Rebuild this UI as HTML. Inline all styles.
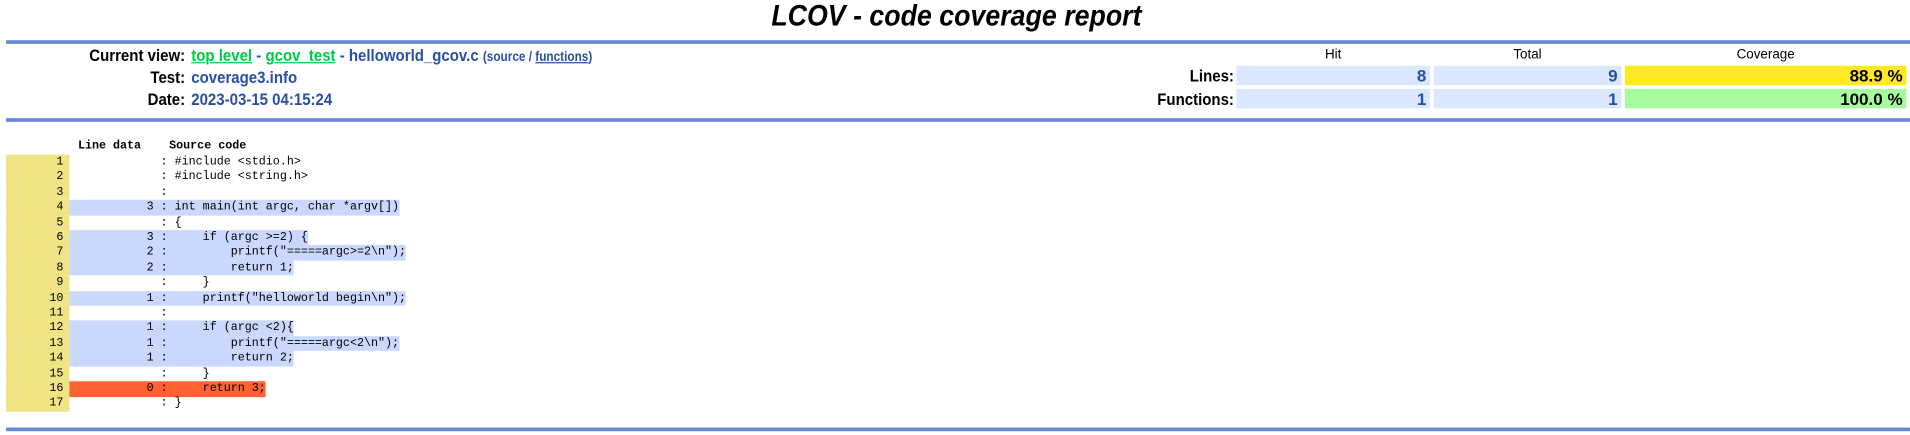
<!DOCTYPE html>
<html><head><meta charset="utf-8"><style>
body{margin:0;background:#fff;font-family:"Liberation Sans",Arial,sans-serif;width:1910px;height:434px;position:relative;overflow:hidden}
#w{position:absolute;left:0;top:0;width:1568px;height:357px;transform:scale(1.2181);transform-origin:0 0}
.a{position:absolute;white-space:pre}
.title{left:0;width:1570px;top:0;text-align:center;font-size:24px;font-weight:bold;font-style:italic;line-height:28px;transform:scaleX(0.915);transform-origin:787px 0}
.rule{position:absolute;left:5px;width:1563px;height:3px;background:#6688d4}
.lab{font-size:14px;font-weight:bold;text-align:right;line-height:18px;transform:scaleX(0.88);transform-origin:100% 0}
.val{font-size:14px;font-weight:bold;color:#284fa8;line-height:18px;transform:scaleX(0.88);transform-origin:0 0}
.g{color:#00cb40;text-decoration:underline}
.sm{font-size:11px}
.cell{position:absolute;height:16px;line-height:16px;font-size:14px;font-weight:bold;text-align:right;color:#284fa8;box-sizing:border-box;padding-right:3px}
.hd{font-size:11px;text-align:center;line-height:14px}
pre{margin:0;font-family:"Liberation Mono","DejaVu Sans Mono",monospace;font-size:9.6px;line-height:12.4px}
.ln{position:absolute;left:5px;width:52px;height:12.6px;background:#efe383;text-align:right;box-sizing:border-box;padding-right:5px}
.row{position:absolute;left:57px;height:12.6px}
.h{background:#cad7fe}
.z{background:#ff6230}
</style></head><body><div id="w">
<div class="a title">LCOV - code coverage report</div>
<div class="rule" style="top:33px"></div>
<div class="a lab" style="left:0;width:152px;top:36px">Current view:</div>
<div class="a lab" style="left:0;width:152px;top:54px">Test:</div>
<div class="a lab" style="left:0;width:152px;top:72px">Date:</div>
<div class="a val" style="left:157px;top:36px"><span class="g">top level</span> - <span class="g">gcov_test</span> - helloworld_gcov.c <span class="sm">(source / <u>functions</u>)</span></div>
<div class="a val" style="left:157px;top:54px">coverage3.info</div>
<div class="a val" style="left:157px;top:72px">2023-03-15 04:15:24</div>
<div class="a hd" style="left:1015px;width:159px;top:38px">Hit</div>
<div class="a hd" style="left:1177px;width:154px;top:38px">Total</div>
<div class="a hd" style="left:1334px;width:231px;top:38px">Coverage</div>
<div class="a lab" style="left:900px;width:113px;top:53px">Lines:</div>
<div class="a lab" style="left:900px;width:113px;top:72px">Functions:</div>
<div class="cell" style="left:1015px;width:159px;top:54px;background:#dae7fe">8</div>
<div class="cell" style="left:1177px;width:154px;top:54px;background:#dae7fe">9</div>
<div class="cell" style="left:1334px;width:231px;top:54px;background:#ffea20;color:#000">88.9 %</div>
<div class="cell" style="left:1015px;width:159px;top:73px;background:#dae7fe">1</div>
<div class="cell" style="left:1177px;width:154px;top:73px;background:#dae7fe">1</div>
<div class="cell" style="left:1334px;width:231px;top:73px;background:#a7fc9d;color:#000">100.0 %</div>
<div class="rule" style="top:97px"></div>
<pre class="a" style="left:64px;top:114px;font-weight:bold">Line data    Source code</pre>
<div id="code"></div>
<div class="rule" style="top:351px"></div>
</div>
<script>
var L=[["","#include &lt;stdio.h&gt;"],["","#include &lt;string.h&gt;"],["",""],["3","int main(int argc, char *argv[])"],["","{"],["3","    if (argc &gt;=2) {"],["2","        printf(\"=====argc&gt;=2\\n\");"],["2","        return 1;"],["","    }"],["1","    printf(\"helloworld begin\\n\");"],["",""],["1","    if (argc &lt;2){"],["1","        printf(\"=====argc&lt;2\\n\");"],["1","        return 2;"],["","    }"],["0","    return 3;"],["","}"]];
var h="";for(var i=0;i<L.length;i++){var t=127+i*12.4;var c=L[i][0];var cls=c==""?"":(c=="0"?"z":"h");
var cnt=("            "+c).slice(-12);
h+='<pre class="ln" style="top:'+t+'px">'+(i+1)+'</pre><pre class="row '+cls+'" style="top:'+t+'px">'+cnt+' : '+L[i][1]+'</pre>';}
document.getElementById("code").innerHTML=h;
</script>
</body></html>
